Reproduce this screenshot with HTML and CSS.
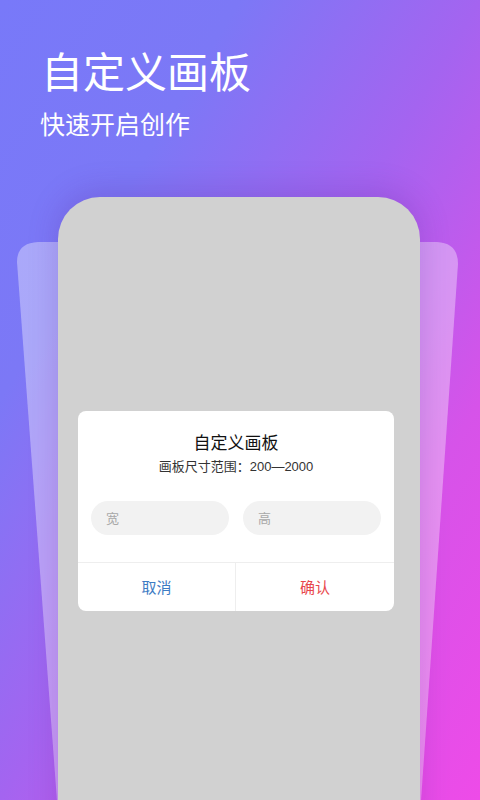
FILE: index.html
```html
<!DOCTYPE html>
<html lang="zh-CN">
<head>
<meta charset="utf-8">
<title>自定义画板</title>
<link rel="stylesheet" href="styles.css">
</head>
<body>
<div class="page">
  <header class="hero">
    <h1 class="hero-title">自定义画板</h1>
    <p class="hero-sub">快速开启创作</p>
  </header>
  <section class="stage">
    <svg class="back-card" width="480" height="560" viewBox="0 241 480 560" aria-hidden="true">
      <path d="M17,262 Q17,243 38,242 L437,242 Q458,243 458,264 L421,801 L57,801 Z" fill="#ffffff" fill-opacity="0.36"/>
    </svg>
    <div class="card">
      <div class="dialog">
        <div class="dialog-body">
          <div class="dialog-title">自定义画板</div>
          <div class="dialog-desc">画板尺寸范围：200—2000</div>
          <div class="inputs">
            <div class="field">宽</div>
            <div class="field">高</div>
          </div>
        </div>
        <div class="actions">
          <div class="btn btn-cancel">取消</div>
          <div class="btn btn-ok">确认</div>
        </div>
      </div>
    </div>
  </section>
</div>
</body>
</html>
```

FILE: styles.css
```css
* { box-sizing: border-box; }
html, body {
  margin: 0;
  padding: 0;
  width: 480px;
  height: 800px;
  overflow: hidden;
}
body {
  font-family: "Noto Sans CJK SC", "Noto Sans", sans-serif;
  background: linear-gradient(to bottom right, #7879f9 0%, #7c78f6 25%, #a464f0 50%, #d653e9 75%, #ee4be8 100%);
}
.page {
  width: 480px;
  height: 800px;
  display: flex;
  flex-direction: column;
}
.hero {
  flex: 0 0 197px;
  padding: 40px 0 0 41px;
  color: #fff;
}
.hero-title {
  margin: 0;
  font-size: 42px;
  font-weight: 400;
  line-height: 60px;
}
.hero-sub {
  margin: 6px 0 0 -1px;
  font-size: 25px;
  font-weight: 400;
  line-height: 34px;
}
.stage {
  position: relative;
  flex: 1;
  display: flex;
}
.back-card {
  position: absolute;
  left: 0;
  top: 44px;
}
.card {
  position: relative;
  margin-left: 58px;
  width: 362px;
  height: 640px;
  flex: 0 0 auto;
  background: #d1d1d1;
  border-radius: 42px 42px 0 0;
  box-shadow: 0 -6px 30px rgba(90, 30, 150, 0.22);
  padding-top: 214px;
  padding-left: 20px;
}
.dialog {
  width: 316px;
  background: #fff;
  border-radius: 8px;
  overflow: hidden;
}
.dialog-body {
  padding: 19px 13px 27px;
  display: flex;
  flex-direction: column;
  align-items: center;
}
.dialog-title {
  font-size: 17px;
  line-height: 24px;
  color: #111;
}
.dialog-desc {
  margin-top: 3px;
  font-family: "Liberation Sans", "Noto Sans CJK SC", sans-serif;
  font-size: 13px;
  line-height: 19px;
  color: #333;
}
.inputs {
  margin-top: 25px;
  width: 100%;
  display: flex;
  gap: 14px;
}
.field {
  flex: 1;
  height: 34px;
  border-radius: 17px;
  background: #f2f2f2;
  color: #a8a8a8;
  font-size: 13px;
  line-height: 34px;
  padding-left: 15px;
}
.actions {
  display: flex;
  border-top: 1px solid #eeeeee;
  height: 49px;
}
.btn {
  flex: 1;
  display: flex;
  align-items: center;
  justify-content: center;
  font-size: 15px;
  padding-bottom: 2px;
}
.btn-cancel {
  color: #3d7cc4;
  border-right: 1px solid #eeeeee;
  flex: 0 0 158px;
}
.btn-ok {
  color: #e8474c;
}
```
